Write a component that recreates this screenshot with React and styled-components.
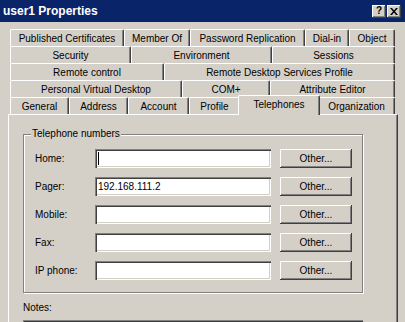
import React from "react";
import styled, { createGlobalStyle } from "styled-components";

const GlobalStyle = createGlobalStyle`
  html, body {
    margin: 0;
    padding: 0;
    background: #d4d0c8;
  }
  body {
    font-family: "Liberation Sans", Arial, sans-serif;
    font-size: 10px;
    color: #000;
  }
`;

const Window = styled.div`
  width: 405px;
  height: 322px;
  overflow: hidden;
  background: #d4d0c8;
  display: flex;
  flex-direction: column;
`;

const TitleBar = styled.div`
  flex: none;
  height: 22px;
  background: #0a246a;
  display: flex;
  align-items: center;
  padding: 0 4px 0 3px;
`;

const Title = styled.div`
  flex: 1;
  color: #fff;
  font-weight: bold;
  font-size: 12px;
`;

const CaptionButtons = styled.div`
  display: flex;
  gap: 1px;
  margin-top: 1px;
`;

const CaptionButton = styled.div`
  width: 14px;
  height: 13px;
  box-sizing: border-box;
  background: #d4d0c8;
  box-shadow: inset -1px -1px #404040, inset 1px 1px #fff,
    inset -2px -2px #808080;
  display: flex;
  align-items: center;
  justify-content: center;
  font-weight: bold;
  font-size: 10px;
  line-height: 1;
  color: #000;
  padding-bottom: 1px;
`;

const Body = styled.div`
  flex: 1;
  display: flex;
  flex-direction: column;
  padding: 7px 7px 0 8px;
`;

const TabStack = styled.div`
  display: flex;
  flex-direction: column;
  padding: 0 3px 0 2px;
`;

const TabRow = styled.div`
  display: flex;
  height: 17px;
  align-items: flex-end;
`;

const Tab = styled.div`
  flex: 0 0 ${(p) => p.$w + (p.$active ? 4 : 0)}px;
  margin: 0 ${(p) => (p.$active ? -2 : 0)}px ${(p) => (p.$active ? -1 : 0)}px;
  height: ${(p) => (p.$active ? 20 : 17)}px;
  box-sizing: border-box;
  position: relative;
  z-index: ${(p) => (p.$active ? 2 : 1)};
  background: #d4d0c8;
  border-top: 1px solid #fff;
  border-left: 1px solid #fff;
  border-right: 1px solid #404040;
  box-shadow: inset -1px 0 #808080;
  border-radius: 2px 2px 0 0;
  display: flex;
  align-items: center;
  justify-content: center;
  padding-bottom: ${(p) => (p.$active ? 3 : 0)}px;
  white-space: nowrap;
`;

const Panel = styled.div`
  flex: 1;
  background: #d4d0c8;
  border-top: 1px solid #fff;
  border-left: 1px solid #fff;
  border-right: 1px solid #404040;
  box-shadow: inset -1px 0 #808080;
  padding: 19px 0 0 14px;
`;

const GroupBox = styled.div`
  position: relative;
  width: 340px;
  box-sizing: border-box;
  border: 1px solid #808080;
  box-shadow: inset 1px 1px #fff, 1px 1px #fff;
  padding: 14px 0 12px 11px;
  display: flex;
  flex-direction: column;
  gap: 9px;
`;

const Legend = styled.span`
  position: absolute;
  top: -7px;
  left: 7px;
  padding: 0 1px;
  background: #d4d0c8;
  line-height: 12px;
`;

const FieldRow = styled.div`
  display: flex;
  align-items: center;
  height: 19px;
`;

const FieldLabel = styled.div`
  width: 60px;
  flex: none;
`;

const TextBox = styled.div`
  width: 176px;
  height: 19px;
  box-sizing: border-box;
  background: #fff;
  box-shadow: inset 1px 1px #808080, inset 2px 2px #404040,
    inset -1px -1px #fff, inset -2px -2px #d4d0c8;
  padding-left: 3px;
  line-height: 19px;
  display: flex;
  align-items: center;
`;

const Caret = styled.span`
  width: 1px;
  height: 13px;
  background: #000;
`;

const PushButton = styled.div`
  width: 72px;
  height: 19px;
  margin-left: 9px;
  box-sizing: border-box;
  background: #d4d0c8;
  box-shadow: inset -1px -1px #404040, inset 1px 1px #fff,
    inset -2px -2px #808080;
  display: flex;
  align-items: center;
  justify-content: center;
`;

const NotesLabel = styled.div`
  margin-top: 9px;
  line-height: 12px;
`;

const NotesArea = styled.div`
  margin-top: 6px;
  width: 340px;
  height: 40px;
  background: #fff;
  box-shadow: inset 1px 1px #808080, inset 2px 2px #404040;
`;

const tabRows = [
  [
    ["Published Certificates", 114],
    ["Member Of", 66],
    ["Password Replication", 115],
    ["Dial-in", 44],
    ["Object", 46],
  ],
  [
    ["Security", 121],
    ["Environment", 141],
    ["Sessions", 123],
  ],
  [
    ["Remote control", 154],
    ["Remote Desktop Services Profile", 231],
  ],
  [
    ["Personal Virtual Desktop", 172],
    ["COM+", 88],
    ["Attribute Editor", 125],
  ],
  [
    ["General", 59],
    ["Address", 59],
    ["Account", 61],
    ["Profile", 51],
    ["Telephones", 78],
    ["Organization", 77],
  ],
];

const phones = [
  { label: "Home:", value: "", caret: true },
  { label: "Pager:", value: "192.168.111.2" },
  { label: "Mobile:", value: "" },
  { label: "Fax:", value: "" },
  { label: "IP phone:", value: "" },
];

const CloseGlyph = () => (
  <svg width="8" height="7" viewBox="0 0 8 7">
    <path d="M0 0h2l2 2.4L6 0h2L5 3.5 8 7H6L4 4.6 2 7H0l3-3.5z" fill="#000" />
  </svg>
);

export default function App() {
  return (
    <Window>
      <GlobalStyle />
      <TitleBar>
        <Title>user1 Properties</Title>
        <CaptionButtons>
          <CaptionButton>?</CaptionButton>
          <CaptionButton>
            <CloseGlyph />
          </CaptionButton>
        </CaptionButtons>
      </TitleBar>
      <Body>
        <TabStack>
          {tabRows.map((row, ri) => (
            <TabRow key={ri}>
              {row.map(([name, w]) => (
                <Tab key={name} $w={w} $active={name === "Telephones"}>
                  {name}
                </Tab>
              ))}
            </TabRow>
          ))}
        </TabStack>
        <Panel>
          <GroupBox>
            <Legend>Telephone numbers</Legend>
            {phones.map((p) => (
              <FieldRow key={p.label}>
                <FieldLabel>{p.label}</FieldLabel>
                <TextBox>{p.caret ? <Caret /> : p.value}</TextBox>
                <PushButton>Other...</PushButton>
              </FieldRow>
            ))}
          </GroupBox>
          <NotesLabel>Notes:</NotesLabel>
          <NotesArea />
        </Panel>
      </Body>
    </Window>
  );
}
